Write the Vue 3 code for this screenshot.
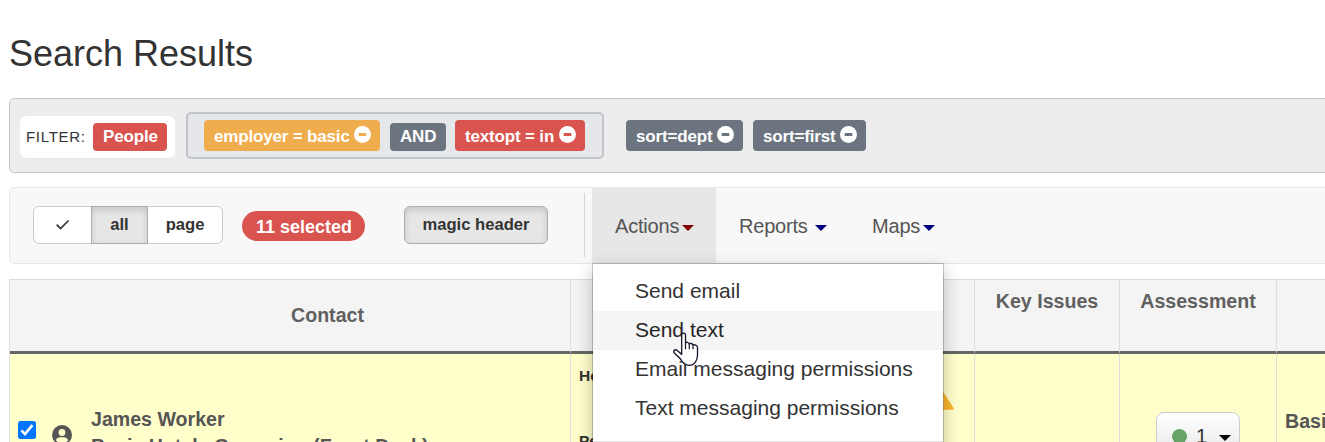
<script setup>
const groupTags = [
  { text: 'employer = basic', kind: 'orange', width: 'w-emp', minus: true },
  { text: 'AND', kind: 'slate', width: 'w-and', minus: false },
  { text: 'textopt = in', kind: 'red', width: 'w-opt', minus: true },
]
const sortTags = [
  { text: 'sort=dept', width: 'w-dept' },
  { text: 'sort=first', width: 'w-first' },
]
const actions = ['Send email', 'Send text', 'Email messaging permissions', 'Text messaging permissions']
</script>

<template>
  <div class="page">
    <h1 class="title">Search Results</h1>

    <div class="filters">
      <div class="filter-box"><span class="filter-label">FILTER:</span><span class="tag red small w-people">People</span></div>
      <div class="group">
        <span v-for="t in groupTags" :key="t.text" class="tag" :class="[t.kind, t.width, { small: !t.minus }]">
          <b>{{ t.text }}</b>
          <svg v-if="t.minus" class="minus" viewBox="0 0 17 17"><circle cx="8.5" cy="8.5" r="8.5" fill="#fff" /><rect x="4.7" y="7" width="7.6" height="3" rx=".5" fill="currentColor" /></svg>
        </span>
      </div>
      <div class="sorts">
        <span v-for="t in sortTags" :key="t.text" class="tag slate" :class="t.width">
          <b>{{ t.text }}</b>
          <svg class="minus" viewBox="0 0 17 17"><circle cx="8.5" cy="8.5" r="8.5" fill="#fff" /><rect x="4.7" y="7" width="7.6" height="3" rx=".5" fill="currentColor" /></svg>
        </span>
      </div>
    </div>

    <div class="toolbar">
      <div class="btn-group">
        <button class="btn first"><svg width="16" height="12" viewBox="0 0 16 12"><path d="M1.7 5.7 5.5 9.5 13.6 1.5" fill="none" stroke="#333" stroke-width="1.7" /></svg></button>
        <button class="btn mid active">all</button>
        <button class="btn last">page</button>
      </div>
      <span class="selected">11 selected</span>
      <button class="btn magic active">magic header</button>
      <div class="divider"></div>
      <nav class="nav">
        <div class="nav-item open">
          <span class="t-actions">Actions</span><i class="caret maroon"></i>
          <div class="menu">
            <div v-for="(a, i) in actions" :key="a" class="menu-item" :class="{ hover: i === 1 }"><span>{{ a }}</span></div>
            <div class="menu-line"></div>
          </div>
          <svg class="cursor" width="27" height="35" viewBox="0 0 27 32" preserveAspectRatio="none"><path d="M8.7 2.9c0-2.5 3.8-2.5 3.8 0v7.200c1-1.100 3.200-.8 3.700.8 1.200-.9 3.300-.5 3.700 1.100 1.400-.8 4.600 0 4.600 2v7.100c0 4.500-2.700 9.400-8.500 9.400-4.700 0-6.800-3-8.600-5.900L1.100 19c-1.300-2.300 1.300-3.600 3.200-2.100l4.400 3.600z" fill="#fff" stroke="#15152a" stroke-width="1.300" stroke-linejoin="round" /><path d="M12.500 10v5.700M16.300 11v4.700M20 12.200v3.500" stroke="#15152a" stroke-width="1.200" /></svg>
        </div>
        <div class="nav-item reports"><span class="t-reports">Reports</span><i class="caret navy"></i></div>
        <div class="nav-item maps"><span class="t-maps">Maps</span><i class="caret navy"></i></div>
      </nav>
    </div>

    <div class="table">
      <div class="th contact"><span>Contact</span></div>
      <div class="th"></div>
      <div class="th top"><span>Key Issues</span></div>
      <div class="th top"><span>Assessment</span></div>
      <div class="th"></div>
      <div class="td person">
        <svg class="check" width="18" height="18" viewBox="0 0 18 18"><rect width="18" height="18" rx="2.5" fill="#0075ff" /><path d="M3.4 9.4 7 13.1 14.4 4.2" fill="none" stroke="#fff" stroke-width="2.7" /></svg>
        <svg class="avatar" width="20" height="20" viewBox="0 0 20 20"><circle cx="10" cy="10" r="10" fill="#555" /><circle cx="10" cy="7.5" r="3.4" fill="#ffc" /><path d="M3.8 15.2C4.6 12.7 7 12.3 10 12.3s5.4.4 6.2 2.9C14.8 17 12.4 18 10 18s-4.8-1-6.2-2.8z" fill="#ffc" /></svg>
        <div class="who"><div class="name">James Worker</div><div class="org">Basic Hotels Grooming (Front Desk)</div></div>
      </div>
      <div class="td details">
        <div class="labels"><div>Home</div><div>Personal</div></div>
        <svg class="warn" width="23" height="18" viewBox="0 0 23 18"><path d="M10 .9q1.5-1.8 3 0L22.6 16q.6 1.7-1.1 1.7H1.5Q-.2 17.7.4 16z" fill="#fcb72b" /><path d="M11.5 5v6M11.5 13v2.2" stroke="#ffffd8" stroke-width="2" /></svg>
      </div>
      <div class="td"></div>
      <div class="td assess">
        <div class="rate"><i class="dot"></i><span>1</span><i class="caret black"></i></div>
      </div>
      <div class="td employer">Basic</div>
    </div>
  </div>
</template>

<style>
html, body { margin: 0; overflow: hidden; background: #fff; }
</style>
<style scoped>
.page { width: 1345px; height: 442px; overflow: hidden; padding-left: 9px; box-sizing: border-box; font-family: "Liberation Sans", Arial, sans-serif; color: #333; }
.page * { box-sizing: border-box; }
.page span, .page b, .page button, .name, .org { white-space: nowrap; }
.title { margin: 0; height: 98px; padding-top: 34px; font-size: 36px; line-height: 40px; font-weight: 400; }
.filters { height: 75px; display: flex; align-items: flex-start; border: 1px solid #c8c8c8; border-radius: 5px; background: #ededed; padding-left: 10px; }
.filter-box { margin-top: 17px; width: 155px; height: 43px; background: #fff; border-radius: 6px; display: flex; padding: 7px 6px 0; border-bottom: 1px solid #e5e5e5; }
.filter-label { width: 67px; font-size: 15px; letter-spacing: .7px; line-height: 28px; }
.tag { display: flex; justify-content: space-between; padding: 0 6px 0 10px; height: 31px; border-radius: 4px; color: #fff; font-size: 17px; font-weight: 700; line-height: 31px; letter-spacing: -.17px; }
.tag b { line-height: 33px; }
.small { height: 28px; line-height: 27px; }
.small b { line-height: 27px; }
.red { background: #d9534f; } .orange { background: #f0ad4e; } .slate { background: #6b747f; }
.minus { width: 17px; height: 17px; margin: 6px 3px 0 0; flex: none; }
.red .minus { color: #d9534f; } .orange .minus { color: #f0ad4e; } .slate .minus { color: #6b747f; }
.w-people { width: 74px; } .w-emp { width: 176px; } .w-and { width: 56px; } .w-opt { width: 130px; } .w-dept { width: 117px; } .w-first { width: 113px; }
.group { margin: 13px 0 0 11px; width: 418px; height: 47px; border: 2px solid #c0c3c9; border-radius: 5px; background: #e5e7eb; padding: 0 0 6px 16px; display: flex; align-items: flex-end; }
.group .w-and { margin: 0 9px 0 10px; }
.sorts { display: flex; gap: 10px; margin: 21px 0 0 22px; }

.toolbar { margin-top: 14px; height: 77px; display: flex; border: 1px solid #e7e7e7; border-radius: 5px; background: #f8f8f8; padding-left: 23px; }
.btn-group { display: flex; margin-top: 18px; }
.btn { height: 38px; padding: 0; border: 1px solid #ccc; background: #fff; color: #333; font: 700 16.6px/36px "Liberation Sans", Arial, sans-serif; display: flex; justify-content: center; }
.btn.first { width: 59px; border-radius: 6px 0 0 6px; align-items: center; }
.btn.mid { width: 57px; margin-left: -1px; z-index: 1; }
.btn.last { width: 76px; margin-left: -1px; border-radius: 0 6px 6px 0; }
.active { background: #e6e6e6; border-color: #adadad; box-shadow: inset 0 3px 6px rgba(0,0,0,.14); }
.selected { margin: 23px 0 0 19px; width: 123px; height: 30px; border-radius: 15px; background: #d9534f; color: #fff; text-align: center; font-size: 18px; font-weight: 700; line-height: 32px; padding-left: 1px; }
.magic { margin: 18px 0 0 39px; width: 144px; border-radius: 6px; }
.divider { width: 1px; height: 64px; background: #d5d5d5; margin: 5px 7px 0 36px; }
.nav { display: flex; height: 75px; color: #555; font-size: 20px; line-height: 76px; }
.nav-item { display: flex; position: relative; }
.nav-item > span { display: block; letter-spacing: -.2px; }
.open { width: 124px; padding-left: 23px; background: #e7e7e7; }
.t-actions { width: 67px; } .reports { padding-left: 23px; width: 134px; } .t-reports { width: 76px; } .maps { padding-left: 22px; } .t-maps { width: 51px; }
.caret { width: 0; height: 0; margin-top: 37px; border: 6px solid transparent; border-bottom: 0; }
.maroon { border-top-color: #800000; } .navy { border-top-color: #000080; } .black { border-top-color: #000; }
.menu { position: absolute; z-index: 3; left: 0; top: 75px; width: 352px; height: 210px; background: #fff; border: 1px solid rgba(0,0,0,.2); background-clip: padding-box; box-shadow: 0 6px 16px rgba(0,0,0,.24); padding-top: 8px; color: #333; font-size: 21px; line-height: 38px; }
.menu-item { height: 39px; padding-left: 42px; }
.hover { background: #f5f5f5; color: #262626; }
.menu-line { height: 1px; margin-top: 13px; background: #e5e5e5; }
.cursor { position: absolute; z-index: 4; left: 81px; top: 144px; }

.table { margin-top: 15px; width: 1400px; display: grid; grid-template-columns: 561px 404px 145px 157px 133px; grid-template-rows: 74px 110px; border-left: 1px solid #ddd; border-top: 1px solid #ddd; color: #555; font-size: 19.6px; font-weight: 700; }
.th { height: 74px; background: #f4f4f4; border-right: 1px solid #ddd; border-bottom: 3px solid #666; text-align: center; line-height: 71px; color: #606060; }
.th.contact { padding-left: 75px; }
.th.top { line-height: 43px; }
.td { background: #ffffcc; border-right: 1px solid #ddd; }
.person { display: flex; }
.check { margin: 67px 0 0 8px; }
.avatar { margin: 71px 0 0 16px; }
.who { margin: 53px 0 0 19px; line-height: 25px; }
.org { margin-top: 2px; }
.details { display: flex; justify-content: space-between; }
.labels { padding: 10px 0 0 8px; color: #333; font-size: 15.5px; line-height: 24px; }
.labels div + div { margin-top: 41px; }
.warn { margin: 38px 20px 0 0; }
.assess { padding: 58px 0 0 36px; }
.rate { width: 84px; height: 46px; border: 1px solid #ccc; border-radius: 8px; background: linear-gradient(#fff, #eee 70%, #e6e6e6); display: flex; padding-left: 15px; color: #333; font-size: 20px; font-weight: 400; line-height: 46px; }
.dot { width: 15px; height: 15px; border-radius: 50%; background: #67a367; margin: 16px 9px 0 0; }
.rate span { width: 23px; }
.rate .caret { margin-top: 22px; }
.employer { padding: 55px 0 0 8px; line-height: 24px; }
</style>
